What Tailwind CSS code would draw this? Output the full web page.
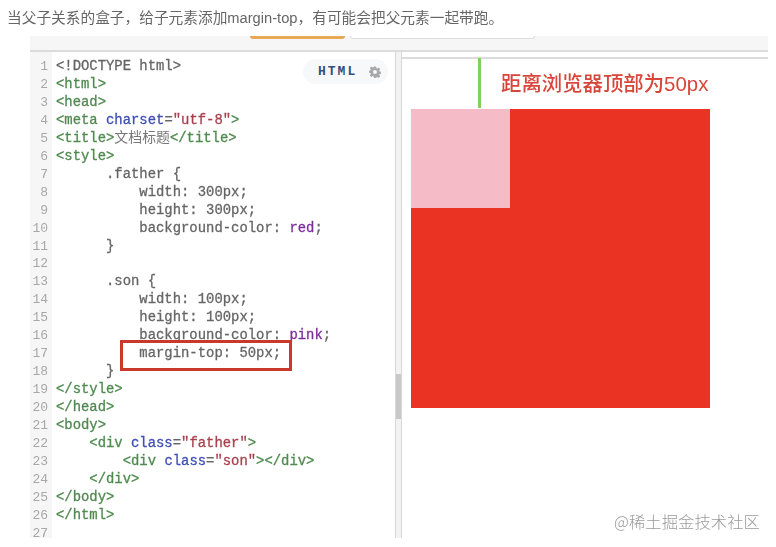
<!DOCTYPE html>
<html lang="zh">
<head>
<meta charset="utf-8">
<script src="https://cdn.jsdelivr.net/npm/@tailwindcss/browser@4"></script>
</head>
<body class="bg-white w-[776px] h-[547px] overflow-hidden relative font-['Liberation_Sans','Noto_Sans_CJK_SC',sans-serif]">
<p class="h-[36px] pl-[7px] pt-[9px] text-[14.7px] leading-[18px] text-[#666666] blur-[0.3px] whitespace-nowrap">当父子关系的盒子，给子元素添加margin-top，有可能会把父元素一起带跑。</p>
<div class="ml-[30px] w-[738px] blur-[0.4px]">
  <div class="h-[16px] bg-[#f6f6f6] border-b-2 border-[#dcdcdc] flex items-start pl-[220px] gap-[5px]">
    <div class="w-[95px] h-[3px] bg-[#e8a855] rounded-b-[3px]"></div>
    <div class="w-[185px] h-[3px] bg-white border-b border-x border-[#dddddd] rounded-b-[4px]"></div>
  </div>
  <div class="flex h-[486px]">
    <div class="relative flex w-[365px] font-['Liberation_Mono','Noto_Sans_CJK_SC',monospace] text-[13.9px] leading-[17.95px] text-[#666666]">
      <div class="w-[22px] bg-[#f6f6f6] pt-[6px] pr-[4px] text-right text-[#a8a8a8] text-[13px]">
        <div>1</div><div>2</div><div>3</div><div>4</div><div>5</div><div>6</div><div>7</div><div>8</div><div>9</div><div>10</div><div>11</div><div>12</div><div>13</div><div>14</div><div>15</div><div>16</div><div>17</div><div>18</div><div>19</div><div>20</div><div>21</div><div>22</div><div>23</div><div>24</div><div>25</div><div>26</div><div>27</div>
      </div>
      <pre class="pl-[4px] pt-[6px] font-[inherit] whitespace-pre [-webkit-text-stroke:0.3px]"><span>&lt;!DOCTYPE html&gt;</span>
<span class="text-[#4f8a4f]">&lt;html&gt;</span>
<span class="text-[#4f8a4f]">&lt;head&gt;</span>
<span class="text-[#4f8a4f]">&lt;meta <span class="text-[#3f4fb5]">charset</span><span class="text-[#666666]">=</span><span class="text-[#a8404f]">"utf-8"</span>&gt;</span>
<span class="text-[#4f8a4f]">&lt;title&gt;<span class="text-[#777777] [-webkit-text-stroke:0px]">文档标题</span>&lt;/title&gt;</span>
<span class="text-[#4f8a4f]">&lt;style&gt;</span>
      .father {
          width: 300px;
          height: 300px;
          background-color: <span class="text-[#7a2f9a]">red</span>;
      }

      .son {
          width: 100px;
          height: 100px;
          background-color: <span class="text-[#7a2f9a]">pink</span>;
          margin-top: 50px;
      }
<span class="text-[#4f8a4f]">&lt;/style&gt;</span>
<span class="text-[#4f8a4f]">&lt;/head&gt;</span>
<span class="text-[#4f8a4f]">&lt;body&gt;</span>
<span class="text-[#4f8a4f]">    &lt;div <span class="text-[#3f4fb5]">class</span><span class="text-[#666666]">=</span><span class="text-[#a8404f]">"father"</span>&gt;</span>
<span class="text-[#4f8a4f]">        &lt;div <span class="text-[#3f4fb5]">class</span><span class="text-[#666666]">=</span><span class="text-[#a8404f]">"son"</span>&gt;&lt;/div&gt;</span>
<span class="text-[#4f8a4f]">    &lt;/div&gt;</span>
<span class="text-[#4f8a4f]">&lt;/body&gt;</span>
<span class="text-[#4f8a4f]">&lt;/html&gt;</span></pre>
      <div class="absolute left-[273px] top-[7px] w-[85px] h-[25px] rounded-full bg-[#f7f8fa] flex items-center pl-[15px] gap-[12px] font-bold text-[13px] text-[#34507f]">
        <span class="tracking-[2px]">HTML</span>
        <svg width="12" height="12" viewBox="0 0 24 24" fill="#a9a9a9"><path d="M10 1h4l.7 3.200 2 .8 2.800-1.800 2.800 2.800L20.500 8.800l.8 2 3.200.7v4l-3.200.7-.8 2 1.800 2.800-2.800 2.800-2.800-1.800-2 .8L14 24h-4l-.7-3.200-2-.8-2.800 1.800-2.800-2.800L3.500 16.200l-.8-2L-.5 13.500v-4l3.200-.7.8-2L1.700 4 4.500 1.200 7.300 3l2-.8zM12 8a4 4 0 1 0 0 8 4 4 0 0 0 0-8z" fill-rule="evenodd"/></svg>
      </div>
      <div class="absolute left-[90px] top-[288px] w-[172px] h-[31px] border-[3px] border-[#c8392b]"></div>
    </div>
    <div class="w-[7px] border-x border-[#d8d8d8] bg-[#f2f2f2] flex flex-col pt-[322px]">
      <div class="h-[45px] bg-[#c9c9c9]"></div>
    </div>
    <div class="flex-1 font-['Liberation_Sans','Noto_Sans_CJK_SC',sans-serif]">
      <div class="h-[7px] border-b-2 border-[#dcdcdc]"></div>
      <div class="h-[50px] flex pl-[76px]">
        <div class="w-[3px] h-[50px] -mt-[1px] bg-[#80d060]"></div>
        <div class="ml-[20px] mt-[13px] h-[24px] leading-[24px] text-[20.4px] font-medium text-[#d8463a] whitespace-nowrap">距离浏览器顶部为50px</div>
      </div>
      <div class="ml-[9px] w-[299px] h-[299px] bg-[#ea3323]">
        <div class="w-[99px] h-[99px] bg-[#f5bcc8]"></div>
      </div>
    </div>
  </div>
</div>
<div class="absolute left-[614px] top-[511px] text-[16.3px] leading-[20px] tracking-[0.1px] text-[#9a9a9a] blur-[0.4px] font-['Noto_Sans_CJK_SC',sans-serif] font-light whitespace-nowrap">@稀土掘金技术社区</div>
</body>
</html>
